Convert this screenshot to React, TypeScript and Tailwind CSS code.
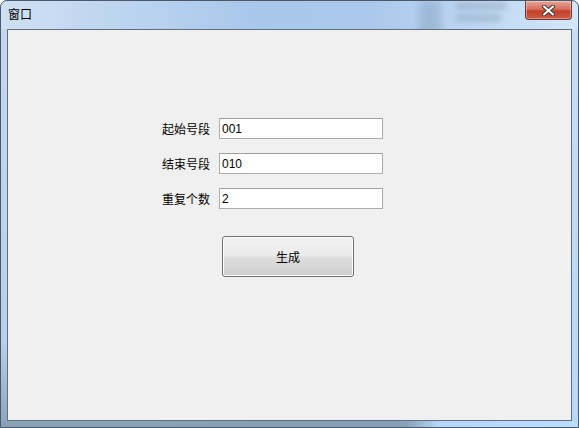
import { useState } from "react"

const cjk = { fontFamily: '"Noto Sans CJK SC", "Noto Sans", sans-serif' }

function Field({ label, value }: { label: string; value: string }) {
  const [v, setV] = useState(value)
  return (
    <div className="flex items-center">
      <span className="w-[54px] text-right text-[12px] leading-none text-black" style={cjk}>
        {label}
      </span>
      <input
        value={v}
        onChange={(e) => setV(e.target.value)}
        className="ml-[9px] h-[21px] w-[164px] border border-[#acacac] border-t-[#a0a0a0] bg-white pl-[2px] text-[12px] text-black outline-none font-['Liberation_Sans',sans-serif]"
      />
    </div>
  )
}

export default function App() {
  return (
    <div className="relative flex h-[428px] w-[579px] flex-col overflow-hidden rounded-t-[7px] border border-[#4a5a6c] bg-[linear-gradient(90deg,#cfe0f3_0%,#b9d2ee_25%,#a8c7ea_45%,#acc9eb_65%,#c2daf4_85%,#d3e6fa_100%)]">
      {/* blurred background behind the glass frame */}
      <div className="pointer-events-none absolute left-[418px] top-0 h-[40px] w-[22px] bg-[#8ea9c6] opacity-60 blur-[4px]" />
      <div className="pointer-events-none absolute left-[455px] top-[2px] h-[6px] w-[50px] bg-[#7f93aa] opacity-50 blur-[3px]" />
      <div className="pointer-events-none absolute left-[455px] top-[14px] h-[6px] w-[45px] bg-[#7f93aa] opacity-50 blur-[3px]" />

      {/* title bar */}
      <div className="relative flex h-[28px] shrink-0 items-start">
        <span className="ml-[7px] mt-[7px] text-[12px] leading-none text-black" style={cjk}>
          窗口
        </span>
        <div className="ml-auto mr-[6px] flex h-[19px] w-[47px] items-center justify-center rounded-b-[4px] border border-t-0 border-[#6b3a33] bg-[linear-gradient(180deg,#e7a597_0%,#d6715d_45%,#c2412a_55%,#d05a3f_100%)] shadow-[inset_0_0_0_1px_rgba(255,255,255,0.35)]">
          <svg width="15" height="11" viewBox="0 0 15 11">
            <path d="M3 1.5 L12 9.5 M12 1.5 L3 9.5" stroke="#3a3a3a" strokeWidth="4" strokeLinecap="round" />
            <path d="M3 1.5 L12 9.5 M12 1.5 L3 9.5" stroke="#ffffff" strokeWidth="2" strokeLinecap="round" />
          </svg>
        </div>
      </div>

      {/* body with side frames */}
      <div className="relative flex flex-1">
        <div className="w-[6px] shrink-0 bg-[linear-gradient(180deg,#c4d9f0_0%,#b9d0ea_80%,#8fa6bd_100%)]" />
        <div className="flex flex-1 flex-col border border-[#5f6f80] bg-[#f0f0f0]">
          <div className="ml-[148px] mt-[88px] flex flex-col gap-[14px]">
            <Field label="起始号段" value="001" />
            <Field label="结束号段" value="010" />
            <Field label="重复个数" value="2" />
          </div>
          <button
            className="ml-[214px] mt-[27px] flex h-[41px] w-[132px] items-center justify-center rounded-[3px] border border-[#707070] bg-[linear-gradient(180deg,#f2f2f2_0%,#ebebeb_48%,#dddddd_52%,#cfcfcf_100%)] text-[12px] text-black shadow-[inset_0_0_0_1px_#fcfcfc]"
            style={cjk}
          >
            生成
          </button>
        </div>
        <div className="w-[6px] shrink-0 bg-[linear-gradient(180deg,#c8def4_0%,#b9d7f6_100%)]" />
      </div>

      {/* bottom frame */}
      <div className="h-[6px] shrink-0 bg-[linear-gradient(90deg,#8aa0b6_0%,#889fb7_70%,#b6d8f9_76%,#bcdcfb_100%)]" />
    </div>
  )
}
